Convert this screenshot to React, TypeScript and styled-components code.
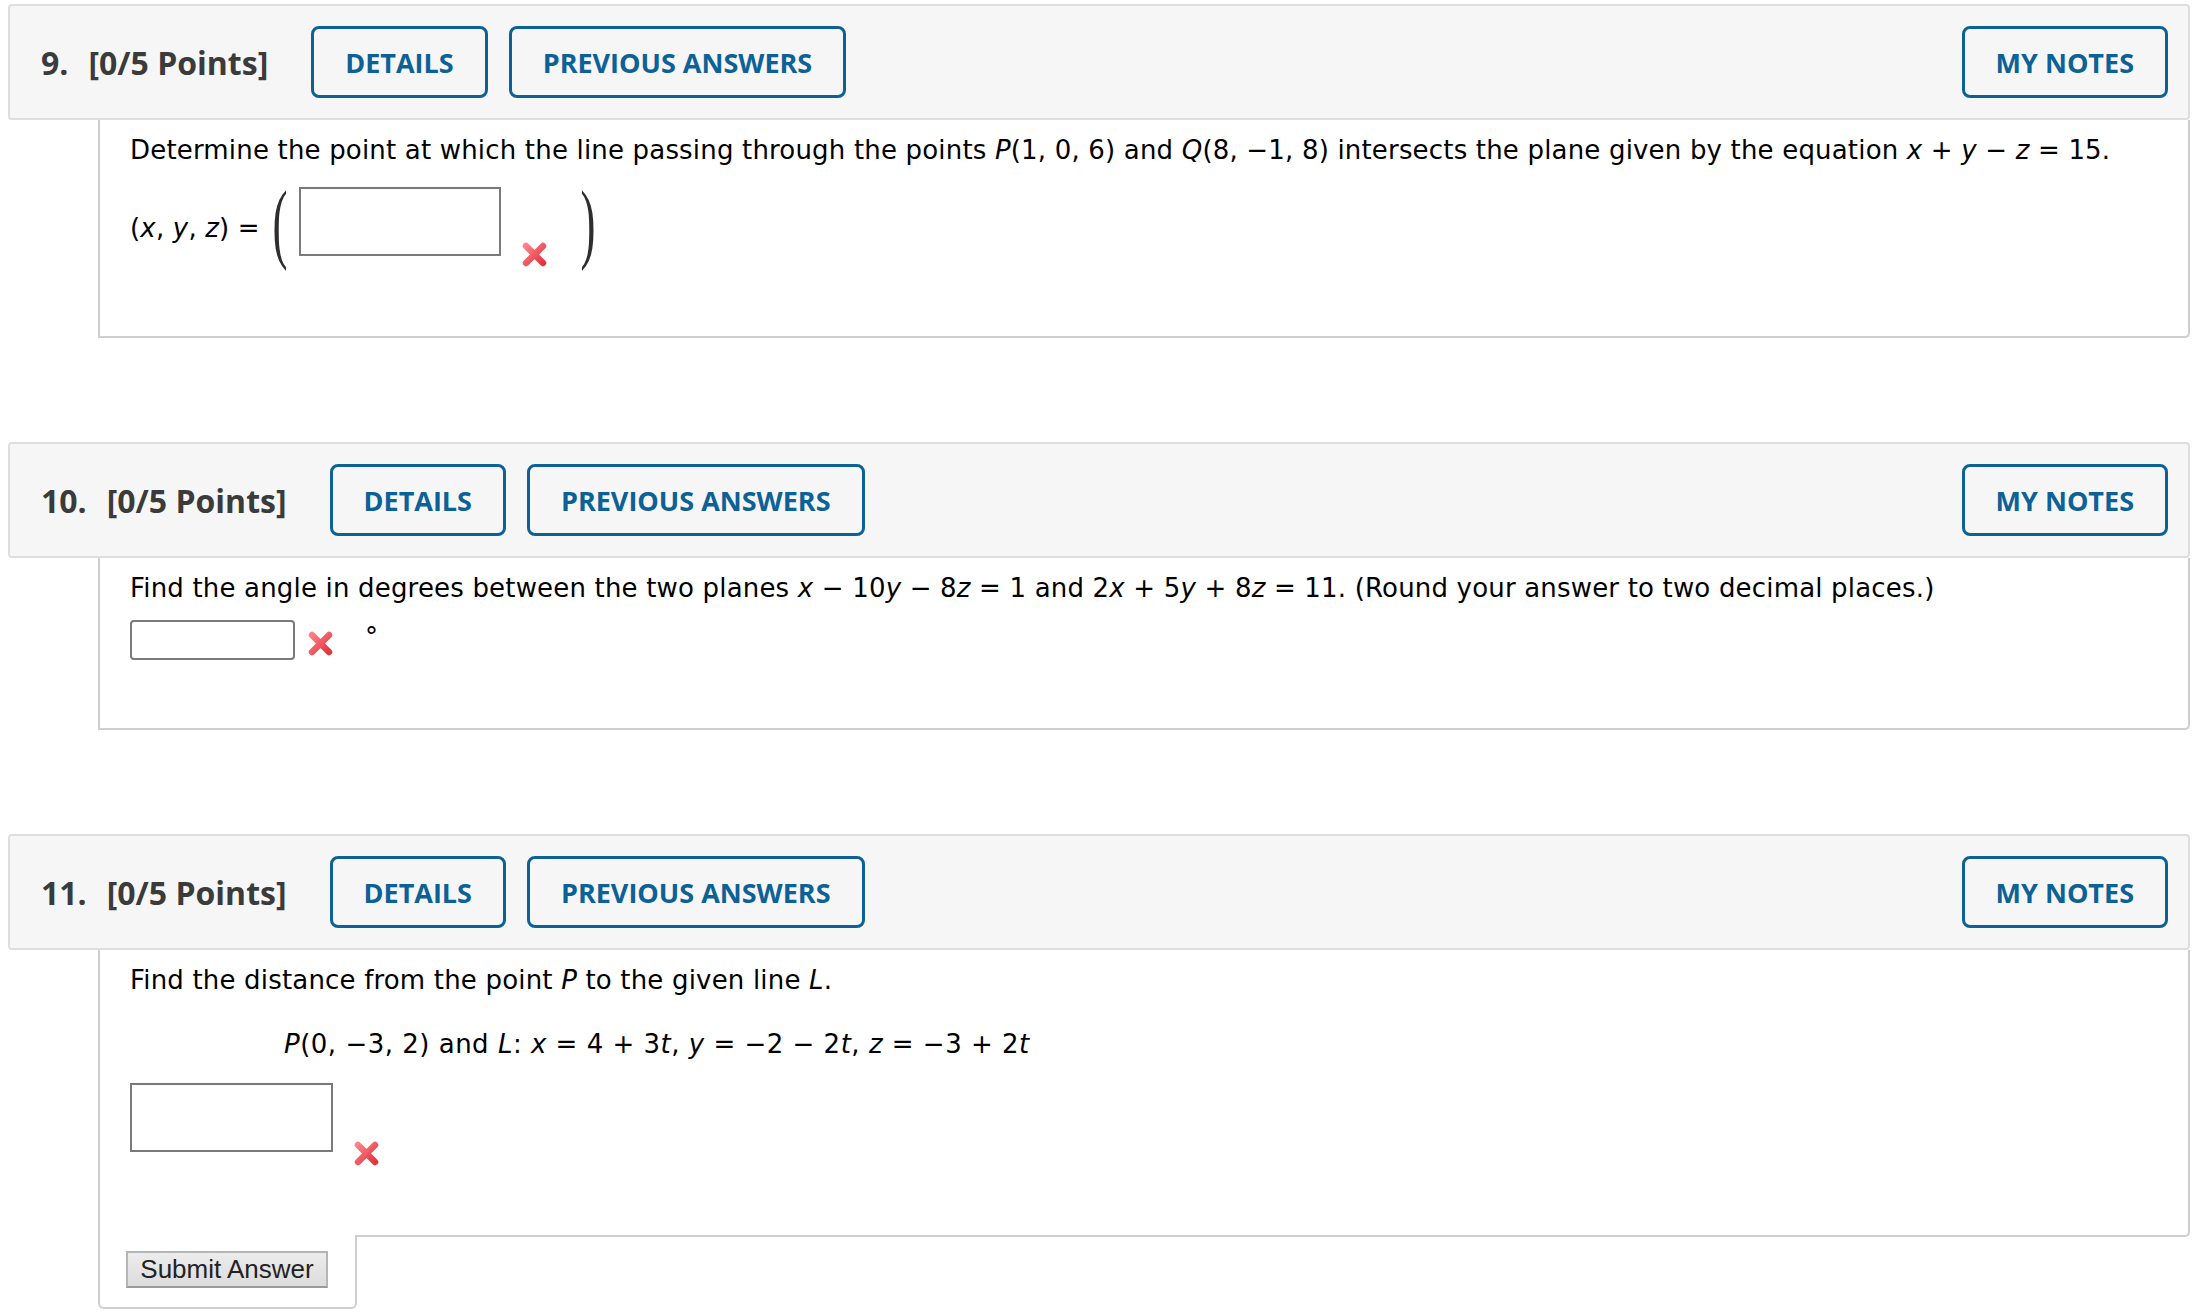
import React from 'react';
import styled, { createGlobalStyle } from 'styled-components';

const GlobalStyle = createGlobalStyle`
  body {
    margin: 0;
    background: #ffffff;
    font-family: 'DejaVu Sans', Verdana, sans-serif;
  }
`;

const CrossIcon = () => (
  <svg width="27" height="27" viewBox="0 0 27 27" aria-hidden="true">
    <defs>
      <linearGradient id="xg" x1="0" y1="0" x2="1" y2="1">
        <stop offset="0" stopColor="#ff8086" />
        <stop offset="1" stopColor="#e2343d" />
      </linearGradient>
    </defs>
    <path d="M5 5 L22 22 M22 5 L5 22" stroke="url(#xg)" strokeWidth="6.5" strokeLinecap="round" fill="none" />
  </svg>
);

type HeaderProps = { num: string };

const QuestionHeader = ({ num }: HeaderProps) => (
  <Header>
    <Title>
      <span>{num}</span>
      <span>[0/5 Points]</span>
    </Title>
    <Actions>
      <HeadButton>DETAILS</HeadButton>
      <HeadButton>PREVIOUS ANSWERS</HeadButton>
    </Actions>
    <NotesButton>MY NOTES</NotesButton>
  </Header>
);

export default function App() {
  return (
    <Page>
      <GlobalStyle />

      <Question>
        <QuestionHeader num="9." />
        <Body>
          <Text>
            Determine the point at which the line passing through the points <V>P</V>(1, 0, 6) and{' '}
            <V>Q</V>(8, −1, 8) intersects the plane given by the equation <V>x</V> + <V>y</V> − <V>z</V> = 15.
          </Text>
          <AnswerRow $top={21}>
            <Label>
              (<V>x</V>, <V>y</V>, <V>z</V>) =
            </Label>
            <Paren>
              <ParenGlyph>(</ParenGlyph>
            </Paren>
            <Field $w={202} $h={69} />
            <Mark $drop={54} $left={20}>
              <CrossIcon />
            </Mark>
            <Paren $left={32}>
              <ParenGlyph>)</ParenGlyph>
            </Paren>
          </AnswerRow>
        </Body>
      </Question>

      <Question>
        <QuestionHeader num="10." />
        <Body>
          <Text>
            Find the angle in degrees between the two planes <V>x</V> − 10<V>y</V> − 8<V>z</V> = 1 and 2<V>x</V> +
            5<V>y</V> + 8<V>z</V> = 11. (Round your answer to two decimal places.)
          </Text>
          <AnswerRow $top={16}>
            <Field $w={165} $h={40} $rounded />
            <Mark $drop={10} $left={12}>
              <CrossIcon />
            </Mark>
            <Degree>°</Degree>
          </AnswerRow>
        </Body>
      </Question>

      <Question>
        <QuestionHeader num="11." />
        <Body>
          <Text>
            Find the distance from the point <V>P</V> to the given line <V>L</V>.
          </Text>
          <Formula>
            <V>P</V>(0, −3, 2) and <V>L</V>: <V>x</V> = 4 + 3<V>t</V>, <V>y</V> = −2 − 2<V>t</V>, <V>z</V> = −3 + 2
            <V>t</V>
          </Formula>
          <AnswerRow $top={23}>
            <Field $w={203} $h={69} />
            <Mark $drop={57} $left={20}>
              <CrossIcon />
            </Mark>
          </AnswerRow>
        </Body>
        <SubmitTab>
          <SubmitButton type="button">Submit Answer</SubmitButton>
        </SubmitTab>
      </Question>
    </Page>
  );
}

const Page = styled.div`
  display: flex;
  flex-direction: column;
  gap: 104px;
  padding: 4px 4px 0 8px;
`;

const Question = styled.section`
  display: flex;
  flex-direction: column;
`;

const Header = styled.header`
  display: flex;
  align-items: center;
  box-sizing: border-box;
  height: 116px;
  padding: 0 20px 0 31px;
  background: #f6f6f6;
  border: 2px solid #dedede;
  border-radius: 4px;
  font-family: 'Open Sans', sans-serif;
`;

const Title = styled.h2`
  display: flex;
  gap: 20px;
  margin: 0;
  font-size: 32px;
  font-weight: 700;
  color: #3b3b3b;
`;

const Actions = styled.div`
  display: flex;
  gap: 21px;
  margin-left: 43px;
`;

const HeadButton = styled.button`
  box-sizing: border-box;
  height: 72px;
  padding: 0 31px;
  background: transparent;
  border: 3px solid #0c6196;
  border-radius: 8px;
  font-family: 'Open Sans', sans-serif;
  font-size: 27px;
  font-weight: 700;
  color: #0c6196;
  cursor: pointer;
`;

const NotesButton = styled(HeadButton)`
  margin-left: auto;
`;

const Body = styled.div`
  margin-left: 90px;
  padding: 15px 30px 68px;
  border: 2px solid #cfcfcf;
  border-top: none;
  border-bottom-right-radius: 5px;
  background: #ffffff;
  color: #000000;
  font-size: 26px;
  letter-spacing: 0.18px;
`;

const Text = styled.p`
  margin: 0;
  line-height: 31px;
`;

const Formula = styled(Text)`
  margin-top: 33px;
  padding-left: 154px;
  letter-spacing: 0.5px;
`;

const V = styled.i`
  font-style: italic;
`;

const AnswerRow = styled.div<{ $top: number }>`
  display: flex;
  align-items: center;
  margin-top: ${({ $top }) => $top}px;
`;

const Label = styled.span`
  line-height: 31px;
  margin-top: 2px;
`;

const Paren = styled.span<{ $left?: number }>`
  display: inline-flex;
  align-items: center;
  justify-content: center;
  width: 16px;
  height: 77px;
  margin-left: ${({ $left }) => $left ?? 12}px;
  margin-right: 11px;
`;

const ParenGlyph = styled.span`
  display: inline-block;
  font-family: 'Liberation Serif', serif;
  font-size: 30px;
  line-height: 30px;
  color: #2e2e2e;
  transform: translateY(-6px) scale(1.5, 2.95);
`;

const Field = styled.div<{ $w: number; $h: number; $rounded?: boolean }>`
  box-sizing: border-box;
  align-self: flex-start;
  width: ${({ $w }) => $w}px;
  height: ${({ $h }) => $h}px;
  background: #ffffff;
  border: 2px solid #7a7a7a;
  border-radius: ${({ $rounded }) => ($rounded ? '4px' : '0')};
`;

const Mark = styled.span<{ $drop: number; $left: number }>`
  display: inline-flex;
  align-self: flex-start;
  margin-top: ${({ $drop }) => $drop}px;
  margin-left: ${({ $left }) => $left}px;
`;

const Degree = styled.span`
  margin-left: 31px;
  line-height: 31px;
  margin-top: -6px;
`;

const SubmitTab = styled.div`
  box-sizing: border-box;
  width: 259px;
  margin-left: 90px;
  margin-top: -2px;
  padding: 16px 0 19px 26px;
  background: #ffffff;
  border: 2px solid #cfcfcf;
  border-top: none;
  border-radius: 0 0 6px 6px;
`;

const SubmitButton = styled.button`
  box-sizing: border-box;
  width: 202px;
  height: 37px;
  padding: 0;
  background: linear-gradient(#ececec, #dcdcdc);
  border: 2px solid #b5b5b5;
  border-bottom-color: #9a9a9a;
  font-family: 'Liberation Sans', Arial, sans-serif;
  font-size: 26px;
  color: #222222;
`;
